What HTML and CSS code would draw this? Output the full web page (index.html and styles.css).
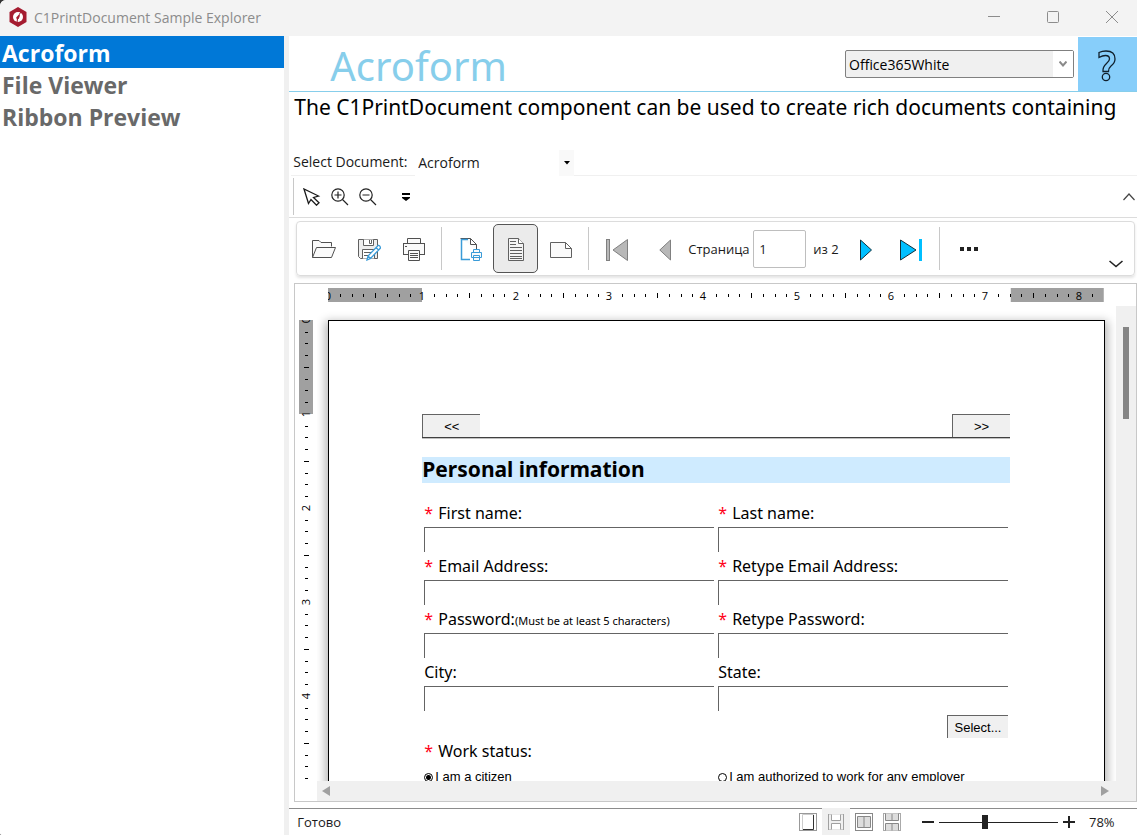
FILE: index.html
```
<!DOCTYPE html>
<html lang="en">
<head>
<meta charset="utf-8">
<title>C1PrintDocument Sample Explorer</title>
<link rel="stylesheet" href="styles.css">
</head>
<body>
<div class="window">
  <header class="titlebar">
    <svg class="logo" width="18" height="20" viewBox="0 0 18 20"><path d="M9 0 17.500 5V15L9 20 .5 15V5z" fill="#a51c30"/><circle cx="9" cy="10" r="5" fill="#fff"/><path d="M10.800 6.500 7.200 10.500 7.800 12.500 9.800 11.800 10.800 9z" fill="#a51c30"/><path d="M8.700 11 8 15.500M12.500 4.500 10.500 7" stroke="#a51c30" fill="none"/></svg>
    <h1 class="app-name">C1PrintDocument Sample Explorer</h1>
    <div class="window-buttons">
      <button class="window-button" aria-label="Minimize"><svg width="12" height="12" viewBox="0 0 12 12"><path d="M0 5.500H12" stroke="#8c8c8c"/></svg></button>
      <button class="window-button" aria-label="Maximize"><svg width="12" height="12" viewBox="0 0 12 12"><rect x=".5" y=".5" width="11" height="11" rx="1" fill="none" stroke="#8c8c8c"/></svg></button>
      <button class="window-button" aria-label="Close"><svg width="12" height="12" viewBox="0 0 12 12"><path d="M0 0 12 12M12 0 0 12" stroke="#8c8c8c"/></svg></button>
    </div>
  </header>

  <div class="body">
    <nav class="samples">
      <a class="sample sample-active" href="#acroform">Acroform</a>
      <a class="sample" href="#viewer">File Viewer</a>
      <a class="sample" href="#ribbon">Ribbon Preview</a>
    </nav>

    <main class="content">
      <div class="heading">
        <h2 class="heading-title">Acroform</h2>
        <div class="theme">
          <select class="theme-select" aria-label="Theme"><option>Office365White</option></select>
          <span class="theme-arrow"><svg width="8" height="6" viewBox="0 0 8 6"><path d="M.5 .5 4 4.500 7.500 .5" fill="none" stroke="#8a8a8a" stroke-width="2"/></svg></span>
        </div>
        <button class="help" aria-label="Help"><svg width="18" height="32" viewBox="0 0 18 32" fill="none" stroke="#10202c" stroke-width="1.300"><path d="M1 2.500Q4 1 8 1 17 1 17 9 17 13 13 16 10.500 18 10.500 21.500H5Q4.500 17 8.500 13.500 11.500 11 11.500 9 11.500 5.500 7.500 5.500 4.500 5.500 1 7.500z"/><circle cx="8" cy="27" r="3.700"/></svg></button>
      </div>

      <p class="description">The C1PrintDocument component can be used to create rich documents containing</p>

      <div class="picker">
        <label class="picker-label" for="doc">Select Document:</label>
        <div class="picker-box">
          <select class="picker-select" id="doc"><option>Acroform</option></select>
          <span class="picker-arrow"><svg width="6" height="4" viewBox="0 0 6 4"><path d="M0 0H6L3 3.500z"/></svg></span>
        </div>
        <span class="picker-rule"></span>
      </div>

      <div class="tools">
        <button class="tool" aria-label="Select"><svg width="18" height="18" viewBox="0 0 18 18" fill="none" stroke="#1a1a1a" stroke-width="1.300"><path d="M1 1 5.500 15.500 8 11.500 13.500 17.200 16 14.800 10.500 9.500 15.500 8z"/></svg></button>
        <button class="tool" aria-label="Zoom in"><svg width="18" height="18" viewBox="0 0 18 18" fill="none" stroke="#222" stroke-width="1.200"><circle cx="7" cy="7" r="6.200"/><path d="M11.500 11.500 17 17M3.500 7H10.500M7 3.500V10.500"/></svg></button>
        <button class="tool" aria-label="Zoom out"><svg width="18" height="18" viewBox="0 0 18 18" fill="none" stroke="#222" stroke-width="1.200"><circle cx="7" cy="7" r="6.200"/><path d="M11.500 11.500 17 17M3.500 7H10.500"/></svg></button>
        <button class="tool tool-more" aria-label="More tools"><svg width="8" height="8" viewBox="0 0 8 8"><path d="M0 0H8V2H0zM0 4H8V5L4 8 0 5z"/></svg></button>
        <button class="tool tool-collapse" aria-label="Collapse"><svg width="12" height="8" viewBox="0 0 12 8"><path d="M.5 7 6 1 11.500 7" fill="none" stroke="#444" stroke-width="1.200"/></svg></button>
      </div>

      <div class="ribbon">
        <div class="group group-file">
          <button class="icon-button" aria-label="Open"><svg width="24" height="24" viewBox="0 0 24 24" fill="#fafafa" stroke="#505050"><path d="M.5 20.500V3.500H7L9 5.500H19.500V9.500"/><path d="M.5 20.500 4.500 10.500H23.500L19.500 20.500z"/></svg></button>
          <button class="icon-button" aria-label="Save"><svg width="24" height="24" viewBox="0 0 24 24" fill="#eee" stroke="#606060"><path d="M1.500 2.500H20.500V21.500H3.500L1.500 19.500z"/><path d="M6.500 2.500V8.500H16.500V2.500M12.500 3V6.500H14.500V3M5.500 21.500V12.500H17.500V21.500M7 15.500H15M7 18.500H13" fill="#fff"/><path d="M10 23 11 19 21 8.500Q23 8 23.500 11L13.500 21.500zM11 19 13.500 21.500M19 10.500 21.500 13" fill="#fff" stroke="#3a9bd8" stroke-width="1.300"/></svg></button>
          <button class="icon-button" aria-label="Print"><svg width="24" height="24" viewBox="0 0 24 24" fill="#fafafa" stroke="#505050"><path d="M5.500 7V1.500H18.500V7"/><rect x="1.500" y="6.500" width="21" height="11"/><path d="M6.500 13.500H17.500V23.500H6.500zM8 16.500H16M8 18.500H16M8 20.500H16M3 9.500H5"/></svg></button>
        </div>
        <span class="separator"></span>
        <div class="group group-page">
          <button class="icon-button" aria-label="Page setup"><svg width="24" height="24" viewBox="0 0 24 24" fill="#fafafa" stroke="#505050"><path d="M1.500 1.500H11.500L17.500 7.500V12M11.500 1.500V7.500H17.500"/><path d="M11 22.500H2.500V2.500H9" fill="none" stroke="#3a9bd8" stroke-width="1.500"/><path d="M14.500 16V12.500H20.500V16M12.500 15.500H22.500V20.500H12.500zM14.500 18.500H20.500V23.500H14.500z" stroke="#3a9bd8"/></svg></button>
          <button class="icon-button icon-button-on" aria-label="Portrait" aria-pressed="true"><svg width="24" height="24" viewBox="0 0 24 24" fill="#f4f4f4" stroke="#606060"><path d="M4.500 1.500H14.500L19.500 6.500V23.500H4.500z"/><path d="M14.500 1.500V6.500H19.500" fill="#fff"/><path d="M6 4.500H12M6 7.500H12M6 10.500H18M6 13.500H18M6 16.500H18M6 19.500H18M6 21.500H18"/></svg></button>
          <button class="icon-button" aria-label="Landscape"><svg width="24" height="24" viewBox="0 0 24 24" fill="#fafafa" stroke="#606060"><path d="M1.500 5.500H16.500L22.500 11.500V20.500H1.500zM16.500 5.500V11.500H22.500"/></svg></button>
        </div>
        <span class="separator"></span>
        <div class="group group-nav">
          <button class="nav-button" aria-label="First page"><svg width="24" height="24" viewBox="0 0 24 24" fill="#b8b8b8" stroke="#808080"><rect x="1.500" y="1.500" width="3" height="21"/><path d="M22.500 1.500V22.500L8 12z"/></svg></button>
          <button class="nav-button nav-previous" aria-label="Previous page"><svg width="12" height="24" viewBox="0 0 12 24"><path d="M11.500 2V22L.8 12z" fill="#b8b8b8" stroke="#808080"/></svg></button>
          <label class="page-label" for="page">Страница</label>
          <input class="page-input" id="page" type="text" value="1">
          <span class="page-total">из 2</span>
          <button class="nav-button" aria-label="Next page"><svg width="12" height="24" viewBox="0 0 12 24"><path d="M.5 2V22L11.500 12z" fill="#00bfff" stroke="#10303c"/></svg></button>
          <button class="nav-button nav-last" aria-label="Last page"><svg width="24" height="24" viewBox="0 0 24 24" fill="#00bfff"><path d="M1.500 2V22L17 12z" stroke="#10303c"/><rect x="20" y="1" width="3" height="22"/></svg></button>
        </div>
        <span class="separator"></span>
        <button class="more" aria-label="More"><svg width="20" height="4" viewBox="0 0 20 4"><path d="M1 0H5V4H1zM8 0H12V4H8zM15 0H19V4H15z" fill="#222"/></svg></button>
        <button class="expand" aria-label="Expand"><svg width="14" height="8" viewBox="0 0 14 8"><path d="M.5 1 7 6.500 13.500 1" fill="none" stroke="#222" stroke-width="1.600"/></svg></button>
      </div>

      <section class="preview">
        <div class="ruler-top">
          <svg width="100%" height="14">
            <defs><pattern id="ticks-x" width="94" height="14" patternUnits="userSpaceOnUse"><path d="M12.500 6V9M24.500 6V9M35.500 6V9M47.500 5V10M59.500 6V9M71.500 6V9M82.500 6V9" stroke="#000"/></pattern></defs>
            <rect class="ruler-margin" width="94" height="14"/>
            <svg x="100%" width="94" height="14" overflow="visible"><rect class="ruler-margin" x="-93" width="93" height="14"/></svg>
            <rect width="100%" height="14" fill="url(#ticks-x)"/>
            <g class="ruler-text"><text x="0" y="12">0</text><text x="94" y="12">1</text><text x="188" y="12">2</text><text x="281" y="12">3</text><text x="375" y="12">4</text><text x="469" y="12">5</text><text x="563" y="12">6</text><text x="657" y="12">7</text><text x="751" y="12">8</text></g>
          </svg>
        </div>
        <div class="ruler-left">
          <svg width="14" height="100%">
            <defs><pattern id="ticks-y" width="14" height="94" patternUnits="userSpaceOnUse"><path d="M6 12.500H9M6 23.500H9M6 35.500H9M5 47.500H10M6 59.500H9M6 70.500H9M6 82.500H9" stroke="#000"/></pattern></defs>
            <rect class="ruler-margin" width="14" height="94"/>
            <rect width="14" height="100%" fill="url(#ticks-y)"/>
            <g class="ruler-text"><text transform="translate(11 0) rotate(-90)">0</text><text transform="translate(11 94) rotate(-90)">1</text><text transform="translate(11 188) rotate(-90)">2</text><text transform="translate(11 282) rotate(-90)">3</text><text transform="translate(11 376) rotate(-90)">4</text></g>
          </svg>
        </div>

        <div class="viewport">
          <form class="page">
            <div class="page-nav">
              <button class="form-button form-button-nav" type="button">&lt;&lt;</button>
              <button class="form-button form-button-nav" type="button">&gt;&gt;</button>
            </div>
            <h3 class="form-title">Personal information</h3>
            <div class="fields">
              <div class="field"><label class="field-label" for="f1"><span class="star">*</span>First name:</label><input class="field-input" id="f1" type="text"></div>
              <div class="field"><label class="field-label" for="f2"><span class="star">*</span>Last name:</label><input class="field-input" id="f2" type="text"></div>
              <div class="field"><label class="field-label" for="f3"><span class="star">*</span>Email Address:</label><input class="field-input" id="f3" type="text"></div>
              <div class="field"><label class="field-label" for="f4"><span class="star">*</span>Retype Email Address:</label><input class="field-input" id="f4" type="text"></div>
              <div class="field"><label class="field-label" for="f5"><span class="star">*</span>Password:<small class="hint">(Must be at least 5 characters)</small></label><input class="field-input" id="f5" type="password"></div>
              <div class="field"><label class="field-label" for="f6"><span class="star">*</span>Retype Password:</label><input class="field-input" id="f6" type="password"></div>
              <div class="field"><label class="field-label" for="f7">City:</label><input class="field-input" id="f7" type="text"></div>
              <div class="field"><label class="field-label" for="f8">State:</label><input class="field-input" id="f8" type="text"></div>
            </div>
            <div class="select-row"><button class="form-button form-button-select" type="button">Select...</button></div>
            <div class="status-label"><span class="star">*</span>Work status:</div>
            <div class="options">
              <label class="option"><input class="radio" type="radio" name="work" checked>I am a citizen</label>
              <label class="option"><input class="radio" type="radio" name="work">I am authorized to work for any employer</label>
            </div>
          </form>
        </div>

        <div class="scroll-y"><span class="thumb-y"></span></div>
        <div class="scroll-x">
          <svg width="8" height="10" viewBox="0 0 8 10"><path d="M8 0V10L0 5z" fill="#a0a0a0"/></svg>
          <svg width="8" height="10" viewBox="0 0 8 10"><path d="M0 0V10L8 5z" fill="#a0a0a0"/></svg>
        </div>
      </section>

      <footer class="statusbar">
        <span class="status-text">Готово</span>
        <div class="views">
          <button class="view" aria-label="Single page"><svg width="18" height="18" viewBox="0 0 18 18" fill="#fff" stroke="#999"><rect x=".5" y=".5" width="17" height="17"/><path d="M3.500 1.500H14.500V16.500H3.500z" stroke="#ccc"/><path d="M14.500 2V16.500H4" stroke="#333" fill="none"/></svg></button>
          <button class="view view-on" aria-label="Continuous" aria-pressed="true"><svg width="18" height="18" viewBox="0 0 18 18" fill="#fff" stroke="#a0a0a0"><rect x="1.500" y="1.500" width="15" height="15" fill="#f0f0f0" stroke="#ccc"/><path d="M4.500 1.500V7.500H13.500V1.500M4.500 16.500V10.500H13.500V16.500M1.500 1V17M16.500 1V17"/></svg></button>
          <button class="view" aria-label="Facing pages"><svg width="18" height="18" viewBox="0 0 18 18" fill="#fff" stroke="#888"><rect x=".5" y=".5" width="17" height="17"/><path d="M2.500 3.500H15.500V14.500H2.500zM9 3.500V14.500" fill="#ddd"/></svg></button>
          <button class="view" aria-label="Facing continuous"><svg width="18" height="18" viewBox="0 0 18 18" fill="#fff" stroke="#888"><rect x=".5" y=".5" width="17" height="17" stroke="#aaa"/><path d="M2.500 .5V7.500H15.500V.5M9 1V7.500M2.500 17.500V10.500H15.500V17.500M9 10.500V17.500" fill="#ddd"/></svg></button>
        </div>
        <div class="zoom">
          <button class="zoom-button" aria-label="Zoom out"><svg width="12" height="12" viewBox="0 0 12 12"><path d="M0 6H12" stroke="#222" stroke-width="2"/></svg></button>
          <input class="zoom-range" type="range" min="0" max="100" value="38" aria-label="Zoom">
          <button class="zoom-button" aria-label="Zoom in"><svg width="12" height="12" viewBox="0 0 12 12"><path d="M0 6H12M6 0V12" stroke="#222" stroke-width="2"/></svg></button>
        </div>
        <span class="zoom-value">78%</span>
      </footer>
    </main>
  </div>
</div>
</body>
</html>
```
FILE: styles.css
```
* { box-sizing: border-box; }
html { background: #333; }
body { margin: 0; font-family: "Open Sans", "Noto Sans", sans-serif; font-size: 14px; color: #1a1a1a; }
button, input, select { margin: 0; padding: 0; border: 0; background: none; color: inherit; font: inherit; border-radius: 0; outline: 0; }
button { display: flex; align-items: center; justify-content: center; }
select { appearance: none; }
svg { display: block; flex: none; }
h1, h2, h3, p { margin: 0; font-weight: 400; }

.window { display: flex; flex-direction: column; height: 100vh; background: #fff; border-radius: 6px 0 0 2px; overflow: hidden; }
.titlebar { display: flex; align-items: center; height: 36px; flex: none; padding: 0 2px 2px 9px; gap: 7px; background: #f3f3f3; }
.app-name { font-size: 14px; color: #8c8c8c; flex: 1; }
.window-buttons { display: flex; gap: 13px; }
.window-button { width: 46px; height: 32px; }

.body { display: flex; flex: 1; min-height: 0; }
.samples { width: 25%; flex: none; background: #fff; }
.sample { display: block; height: 32px; padding-left: 2px; font-size: 23px; line-height: 34px; font-weight: 700; color: #696969; text-decoration: none; }
.sample-active { background: #0078d7; color: #fff; }
.content { display: flex; flex-direction: column; flex: 1; min-width: 0; border-left: 5px solid #f0f0f0; }

.heading { display: flex; align-items: center; height: 56px; flex: none; padding-top: 1px; border-bottom: 1px solid #87ceeb; }
.heading-title { flex: 1; padding: 4px 0 0 41px; font-family: "Noto Sans", sans-serif; font-size: 40px; line-height: 50px; color: #87ceeb; }
.theme { position: relative; width: 229px; height: 28px; margin-right: 4px; }
.theme-select { width: 100%; height: 100%; padding-left: 3px; border: 1px solid #808080; border-radius: 2px; background: #f0f0f0; color: #000; }
.theme-arrow { position: absolute; top: 1px; right: 1px; bottom: 1px; width: 20px; display: flex; align-items: center; justify-content: center; background: #fff; pointer-events: none; }
.help { width: 59px; height: 54px; padding: 4px 2px 0 0; background: #87cefa; }

.description { flex: none; height: 58px; padding-left: 5px; font-family: "Noto Sans", sans-serif; font-size: 21px; line-height: 30px; color: #000; white-space: nowrap; overflow: hidden; }

.picker { display: flex; height: 26px; flex: none; padding-left: 2px; }
.picker-label { width: 124px; padding-left: 2px; line-height: 24px; white-space: nowrap; border-bottom: 1px solid #f0f0f0; }
.picker-box { position: relative; width: 159px; }
.picker-select { width: 100%; height: 24px; padding-left: 3px; }
.picker-arrow { position: absolute; top: 0; right: 0; width: 15px; height: 26px; display: flex; align-items: center; justify-content: center; background: #f9f9f9; pointer-events: none; }
.picker-rule { flex: 1; border-bottom: 1px solid #f0f0f0; }

.tools { display: flex; align-items: center; height: 42px; flex: none; padding-left: 4px; border-bottom: 1px solid #dcdcdc; }
.tools::before { content: ""; width: 1px; height: 37px; background: #c8c8c8; margin-right: 4px; }
.tool { width: 28px; height: 28px; }
.tool-more { margin-left: 10px; }
.tool-collapse { width: 20px; margin-left: auto; margin-right: -2px; }

.ribbon { display: flex; align-items: center; height: 55px; flex: none; margin: 3px 2px 0 7px; border: 1px solid #dcdcdc; border-radius: 4px; box-shadow: 0 2px 3px #e4e4e4; }
.group { display: flex; align-items: center; }
.group-file { padding: 0 5px 0 4px; }
.group-page { padding: 0 5px 0 6px; }
.group-nav { padding: 0 14px; }
.separator { width: 1px; height: 43px; background: #c8c8c8; }
.icon-button { width: 45px; height: 49px; border: 1px solid transparent; border-radius: 5px; }
.icon-button-on { border-color: #555; background: #ebebeb; }
.nav-button { height: 40px; padding: 2px 2px 0; }
.nav-previous { margin-left: 26px; }
.nav-last { margin-left: 23px; }
.page-label { width: 62px; margin-left: 15px; font-size: 13px; white-space: nowrap; }
.page-input { width: 53px; height: 38px; margin-left: 3px; padding-left: 5px; border: 1px solid #bebebe; border-radius: 2px; font-size: 13px; }
.page-total { width: 52px; padding-left: 7px; font-size: 13px; white-space: nowrap; }
.more { width: 58px; height: 40px; }
.expand { align-self: flex-end; width: 36px; height: 22px; margin-left: auto; }

.preview { display: grid; grid-template-columns: 22px minmax(0, 1fr) 20px; grid-template-rows: 22px minmax(0, 1fr) 20px; flex: 1; min-height: 0; margin: 7px 0 6px 5px; border: 1px solid #c8c8c8; }
.ruler-top { grid-area: 1 / 2; height: 14px; margin: 4px 12px 0 11px; }
.ruler-left { grid-area: 2 / 1; margin: 14px 0 2px 4px; min-height: 0; }
.ruler-margin { fill: #a0a0a0; }
.ruler-text { font-size: 11px; text-anchor: middle; fill: #000; }
.viewport { grid-area: 2 / 2; min-height: 0; padding: 14px 11px 0; overflow: hidden; }
.page { height: 1100px; padding: 93px 94px 0 93px; border: 1px solid #000; background: #fff; box-shadow: 0 4px 9px 3px #b8b8b8; font-family: "Noto Sans", sans-serif; font-size: 16px; color: #000; }
.page-nav { display: flex; justify-content: space-between; height: 24px; border-bottom: 1px solid #404040; box-shadow: 0 1px #c0c0c0; }
.form-button { height: 23px; border: solid #646464; border-width: 1px 0 0 1px; background: #f0f0f0; font-family: "Liberation Sans", sans-serif; font-size: 13px; }
.form-button-nav { width: 58px; }
.form-button-select { width: 61px; }
.form-title { height: 26px; margin-top: 19px; background: #cfebff; font-size: 21px; line-height: 24px; font-weight: 700; }
.fields { display: grid; grid-template-columns: 1fr 1fr; column-gap: 4px; padding: 16px 2px 0; }
.field { display: flex; flex-direction: column; min-width: 0; }
.field-label { height: 28px; line-height: 28px; white-space: nowrap; }
.field-input { width: 100%; height: 25px; border: solid #646464; border-width: 1px 0 0 1px; }
.star { display: inline-block; width: 14px; color: #ff0018; }
.hint { font-size: 11px; }
.select-row { display: flex; justify-content: flex-end; padding: 4px 2px 0; }
.status-label { height: 27px; padding-left: 2px; line-height: 27px; }
.options { display: grid; grid-template-columns: 1fr 1fr; column-gap: 4px; padding: 2px 2px 0; }
.option { display: flex; align-items: center; gap: 2px; font-family: "Liberation Sans", sans-serif; font-size: 13px; line-height: 20px; white-space: nowrap; }
.radio { appearance: none; width: 9px; height: 9px; border: 1px solid #000; border-radius: 50%; }
.radio:checked { background: radial-gradient(#000 2px, #fff 3px); }

.scroll-y { grid-area: 2 / 3 / 4 / 4; display: flex; padding: 21px 0 0 7px; background: #f0f0f0; }
.thumb-y { width: 6px; height: 92px; background: #858585; }
.scroll-x { grid-area: 3 / 2; display: flex; align-items: center; justify-content: space-between; padding: 0 7px 0 5px; background: #f0f0f0; }

.statusbar { display: flex; align-items: center; height: 27px; flex: none; padding: 0 21px 0 8px; border-top: 1px solid #8c8c8c; font-size: 13px; }
.status-text { flex: 1; }
.views { display: flex; }
.view { width: 28px; height: 28px; }
.view-on { background: #f0f0f0; }
.zoom { display: flex; align-items: center; gap: 5px; margin-left: 16px; }
.zoom-button { width: 12px; height: 20px; }
.zoom-range { appearance: none; width: 119px; height: 14px; background: linear-gradient(#222, #222) center / 100% 1px no-repeat; }
.zoom-range::-webkit-slider-thumb { appearance: none; width: 6px; height: 14px; background: #222; }
.zoom-value { width: 27px; margin-left: 14px; }
```
